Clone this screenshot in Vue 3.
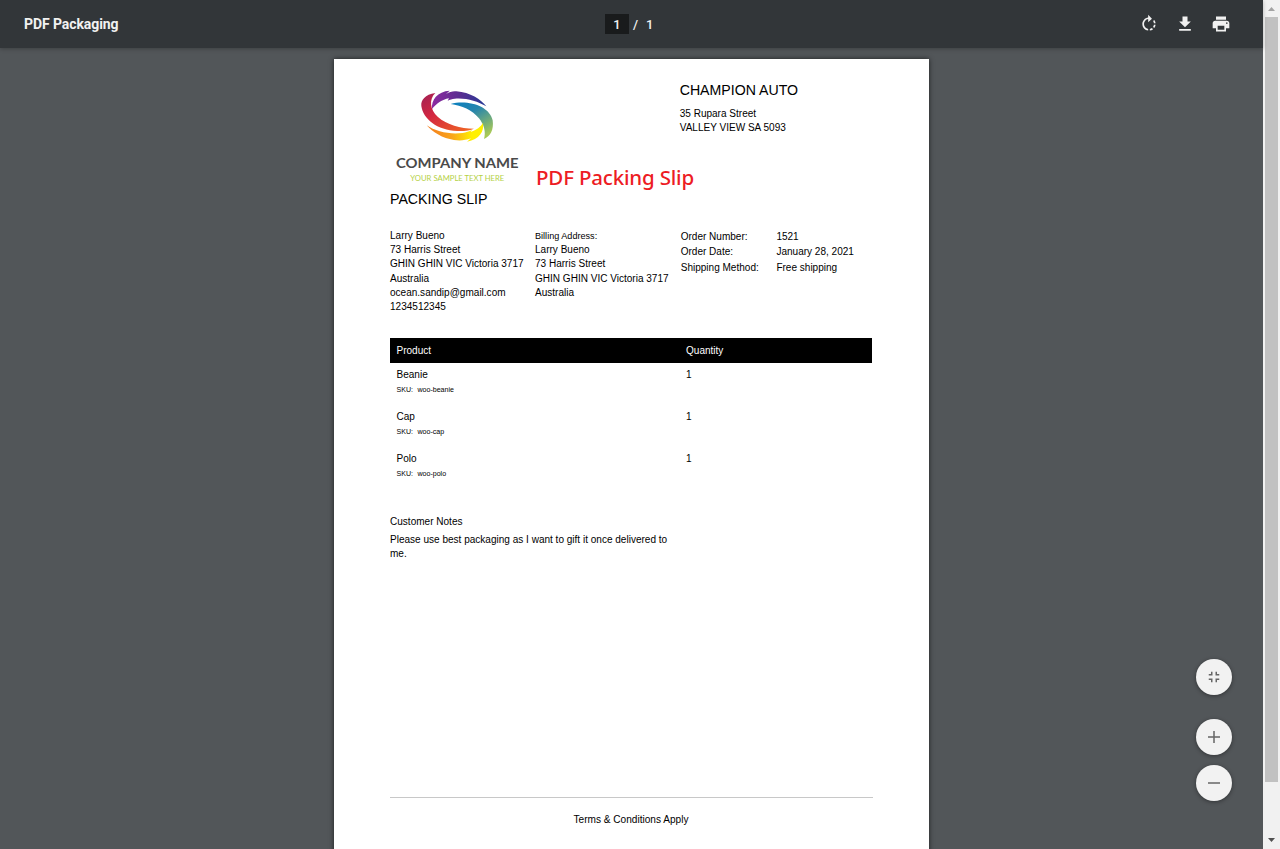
<script setup>
const shipping = ['Larry Bueno', '73 Harris Street', 'GHIN GHIN VIC Victoria 3717', 'Australia', 'ocean.sandip@gmail.com', '1234512345']
const billing = ['Larry Bueno', '73 Harris Street', 'GHIN GHIN VIC Victoria 3717', 'Australia']
const order = [
  ['Order Number:', '1521'],
  ['Order Date:', 'January 28, 2021'],
  ['Shipping Method:', 'Free shipping'],
]
const products = [
  { name: 'Beanie', sku: 'woo-beanie', qty: 1 },
  { name: 'Cap', sku: 'woo-cap', qty: 1 },
  { name: 'Polo', sku: 'woo-polo', qty: 1 },
]
</script>

<template>
  <div class="viewer">
    <div class="main">
      <header class="toolbar">
        <div class="title">PDF Packaging</div>
        <div class="pages"><span class="current">1</span><span class="slash">/</span><span>1</span></div>
        <div class="actions">
          <svg viewBox="0 0 24 24"><path d="M15.55 5.55L11 1v3.07C7.06 4.56 4 7.92 4 12s3.05 7.44 7 7.93v-2.02c-2.84-.48-5-2.94-5-5.91s2.16-5.43 5-5.91V10l4.55-4.45zM19.93 11c-.17-1.39-.72-2.73-1.62-3.89l-1.42 1.42c.54.75.88 1.6 1.02 2.47h2.02zM13 17.9v2.02c1.39-.17 2.74-.71 3.9-1.61l-1.44-1.44c-.75.54-1.59.89-2.46 1.03zm3.89-2.42l1.42 1.41c.9-1.16 1.45-2.5 1.62-3.89h-2.02c-.14.87-.48 1.72-1.02 2.48z" /></svg>
          <svg viewBox="0 0 24 24"><path d="M19 9h-4V3H9v6H5l7 7 7-7zM5 18v2h14v-2H5z" /></svg>
          <svg viewBox="0 0 24 24"><path d="M19 8H5c-1.66 0-3 1.34-3 3v6h4v4h12v-4h4v-6c0-1.66-1.34-3-3-3zm-3 11H8v-5h8v5zm3-7c-.55 0-1-.45-1-1s.45-1 1-1 1 .45 1 1-.45 1-1 1zm-1-9H6v4h12V3z" /></svg>
        </div>
      </header>

      <div class="canvas">
        <article class="sheet">
          <div class="head">
            <svg class="logo" viewBox="0 0 134 104">
              <defs>
                <linearGradient id="red" x1="0" y1="0" x2="1" y2="1"><stop offset="0" stop-color="#a02055" /><stop offset=".4" stop-color="#d42740" /><stop offset="1" stop-color="#f26a21" /></linearGradient>
                <linearGradient id="violet"><stop offset="0" stop-color="#8d2aa0" /><stop offset=".5" stop-color="#5b2d91" /><stop offset="1" stop-color="#243a96" /></linearGradient>
                <linearGradient id="blue" x1="0" y1="0" x2=".7" y2="1"><stop offset="0" stop-color="#087fc0" /><stop offset=".4" stop-color="#2685ad" /><stop offset="1" stop-color="#a9c957" /></linearGradient>
                <linearGradient id="gold"><stop offset="0" stop-color="#f37c20" /><stop offset=".45" stop-color="#f9a51b" /><stop offset=".8" stop-color="#fff000" /></linearGradient>
              </defs>
              <g transform="translate(20 0) scale(.33333)">
                <path fill="url(#red)" d="M76 27C45 31 32 49 34 66C39 104 81 139 142 141C164 142 181 138 192 134C151 133 111 123 83 98C60 77 56 46 76 27Z" />
                <path fill="url(#violet)" d="M66 75C63 48 82 22 119 20L108 30C119 23 129 21 139 22C181 25 213 47 229 67C202 51 168 41 134 44C126 45 120 47 113 50L117 43C96 47 79 59 66 75Z" />
                <path fill="url(#blue)" d="M122 60C171 46 239 65 248 109C252 137 241 158 222 165C228 145 223 124 207 103C187 78 155 64 122 60Z" />
                <path fill="url(#gold)" d="M50 124C77 143 119 152 158 147C168 145 178 142 186 137L182 144C200 138 212 129 219 117C223 141 209 167 171 173L183 163C165 170 148 170 132 168C98 163 68 145 50 124Z" />
              </g>
              <text x="6" y="83.5" class="company" textLength="122.5" lengthAdjust="spacingAndGlyphs">COMPANY NAME</text>
              <text x="20.3" y="97" class="tag" textLength="94" lengthAdjust="spacingAndGlyphs">YOUR SAMPLE TEXT HERE</text>
            </svg>
            <div class="caption">PDF Packing Slip</div>
            <div class="shop">
              <h2>CHAMPION AUTO</h2>
              <div>35 Rupara Street</div>
              <div>VALLEY VIEW SA 5093</div>
            </div>
          </div>
          <h1>PACKING SLIP</h1>

          <section class="info">
            <div><div v-for="l in shipping" :key="l" class="line">{{ l }}</div></div>
            <div>
              <div class="line label">Billing Address:</div>
              <div v-for="l in billing" :key="l" class="line">{{ l }}</div>
            </div>
            <dl>
              <template v-for="o in order" :key="o[0]"><dt>{{ o[0] }}</dt><dd>{{ o[1] }}</dd></template>
            </dl>
          </section>

          <section class="items">
            <div class="row th"><span>Product</span><span>Quantity</span></div>
            <div v-for="p in products" :key="p.sku" class="row item">
              <div><div>{{ p.name }}</div><div class="sku"><span>SKU:</span><span>{{ p.sku }}</span></div></div>
              <div>{{ p.qty }}</div>
            </div>
          </section>

          <section class="notes">
            <h3>Customer Notes</h3>
            <p>Please use best packaging as I want to gift it once delivered to me.</p>
          </section>
          <footer>Terms &amp; Conditions Apply</footer>
        </article>
      </div>

      <div class="zoom">
        <button class="fit"><svg viewBox="0 0 24 24"><path d="M5 16h3v3h2v-5H5v2zm3-8H5v2h5V5H8v3zm6 11h2v-3h3v-2h-5v5zm2-11V5h-2v5h5V8h-3z" /></svg></button>
        <button><svg viewBox="0 0 24 24"><path d="M20 13h-7v7h-2v-7H4v-2h7V4h2v7h7v2z" /></svg></button>
        <button><svg viewBox="0 0 24 24"><path d="M4 11h16v2H4z" /></svg></button>
      </div>
    </div>

    <div class="scrollbar">
      <svg viewBox="0 0 17 17"><path fill="#a3a3a3" d="M5 11L8.5 7L12 11Z" /></svg>
      <div class="thumb"></div>
      <svg viewBox="0 0 17 17"><path fill="#505050" d="M5 6L8.5 10L12 6Z" /></svg>
    </div>
  </div>
</template>

<style>
body { margin: 0; overflow: hidden; }
</style>

<style scoped>
* { box-sizing: border-box; }
.viewer { display: flex; width: 1280px; height: 849px; overflow: hidden; background: #525659; font-family: "Liberation Sans", Arial, sans-serif; }
.main { position: relative; display: flex; flex-direction: column; width: 1263px; height: 849px; }
.toolbar { position: relative; z-index: 1; display: grid; grid-template-columns: 605px 1fr auto; align-items: center; flex: none; height: 48px; padding: 0 32px 0 0; background: #323639; color: #f1f1f1; box-shadow: 0 1px 4px rgba(0, 0, 0, .25); font-family: Roboto, sans-serif; font-weight: 500; }
.title { padding-left: 24px; font-size: 14px; font-weight: 700; letter-spacing: -.08px; }
.pages { display: flex; align-items: center; font-size: 13px; }
.current { width: 24px; height: 20px; line-height: 21px; text-align: center; background: #191b1c; }
.slash { margin: 0 8px 0 4px; }
.actions { display: flex; gap: 16px; }
.actions svg { width: 20px; height: 20px; fill: #f1f1f1; }
.canvas { flex: 1; display: flex; justify-content: center; align-items: flex-start; padding-top: 11px; overflow: hidden; }
.sheet { width: 595px; height: 842px; flex: none; padding: 25px 56px 0; background: #fff; color: #000; font-size: 10.04px; line-height: 14.2px; box-shadow: 0 0 5px rgba(0, 0, 0, .65); }
.head { display: flex; height: 104px; }
.logo { width: 134px; height: 104px; flex: none; }
.company { font: 700 14px Lato, sans-serif; fill: #4a4a4a; }
.tag { font: 400 7px Lato, sans-serif; fill: #b5d146; }
.caption { width: 155.7px; flex: none; padding: 78px 0 0 12px; font: 500 20.5px/30px "Noto Sans", "Open Sans", sans-serif; letter-spacing: -.18px; color: #ed1c24; white-space: nowrap; }
.shop { line-height: 14px; white-space: nowrap; }
.shop h2 { margin: -2px 0 9px; font-size: 14.15px; font-weight: 400; line-height: 16px; }
h1 { margin: 3px 0 0; font-size: 14.2px; font-weight: 400; line-height: 16px; }
.info { display: grid; grid-template-columns: 145px 145.7px 1fr; height: 109px; margin-top: 22px; white-space: nowrap; }
.label { font-size: 9.1px; }
dl { display: grid; grid-template-columns: 95.7px 1fr; grid-auto-rows: 15.4px; margin: 1px 0 0; }
dt, dd { margin: 0; }
.items { width: 482px; }
.row { display: grid; grid-template-columns: 289.5px 1fr; padding: 0 6.5px; }
.th { height: 25px; line-height: 25px; background: #000; color: #fff; }
.item { height: 42px; padding-top: 5px; }
.sku { display: flex; gap: 4.5px; margin-top: 1px; font-size: 7.05px; }
.notes { height: 308px; padding-top: 26px; }
h3 { margin: 0 0 4px; font-size: 10.04px; font-weight: 400; }
p { width: 285px; margin: 0; }
footer { width: 483px; padding: 15px 1px 0 0; border-top: 1px solid #c8c8c8; text-align: center; font-size: 10.1px; }
.zoom { position: absolute; right: 31px; top: 659px; display: flex; flex-direction: column; gap: 10px; }
.zoom button { display: grid; place-items: center; width: 36px; height: 36px; padding: 0; border: 0; border-radius: 50%; background: #f2f2f2; box-shadow: 0 1px 4px rgba(0, 0, 0, .4); }
.zoom .fit { margin-bottom: 14px; }
.zoom svg { width: 18px; height: 18px; fill: #666; }
.scrollbar { display: flex; flex-direction: column; align-items: center; width: 17px; background: #f1f1f1; }
.scrollbar svg { width: 17px; height: 17px; }
.thumb { width: 13px; height: 765px; margin-bottom: 50px; background: #c1c1c1; }
</style>
